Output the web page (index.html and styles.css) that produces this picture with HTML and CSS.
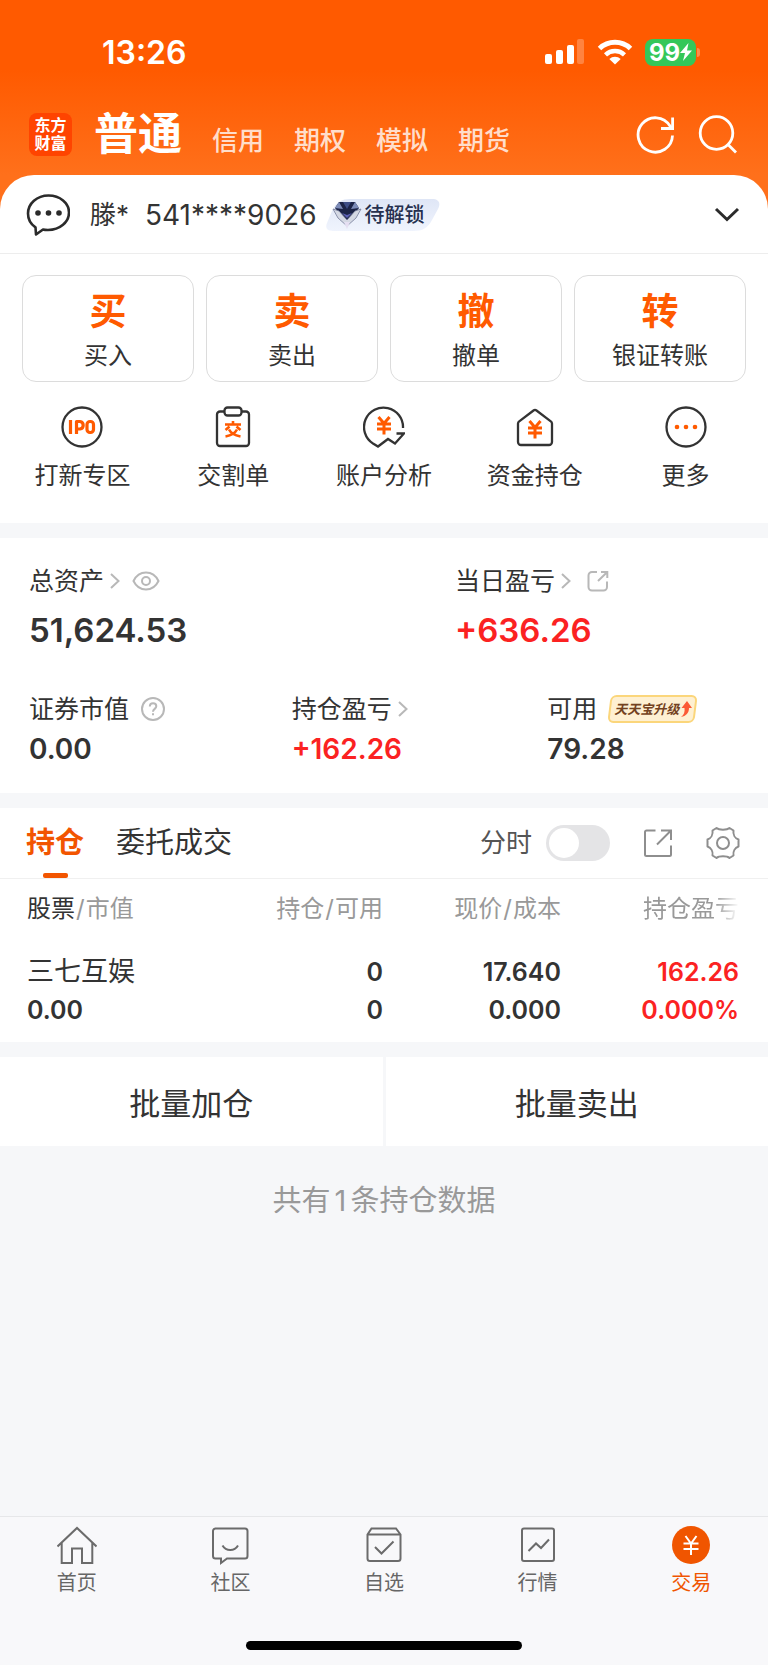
FILE: index.html
```html
<!DOCTYPE html>
<html lang="zh-CN">
<head>
    <meta charset="UTF-8">
    <meta name="viewport" content="width=device-width, initial-scale=1.0">
    <title>东方财富 - 交易</title>
    <link rel="stylesheet" href="styles.css">
</head>
<body>
    <div class="top">
        <div class="status-bar">
            <span class="time">13:26</span>
            <div class="status-icons">
                <svg class="signal" width="40" height="26" viewBox="0 0 40 26" fill="#fff">
                    <rect x="0" y="15" width="7" height="10" rx="2"/>
                    <rect x="11" y="11" width="7" height="14" rx="2"/>
                    <rect x="22" y="6" width="7" height="19" rx="2"/>
                    <rect x="32" y="0" width="7" height="25" rx="2" opacity="0.25"/>
                </svg>
                <svg class="wifi" width="36" height="26" viewBox="0 0 36 26" fill="none" stroke="#fff" stroke-width="5">
                    <path d="M2.5 9.5a22.5 22.5 0 0 1 31 0"/>
                    <path d="M8.5 15.8a14 14 0 0 1 19 0" stroke-width="4.500"/>
                    <path d="M12.3 19.9a8.5 8.5 0 0 1 11.4 0L18 25.400z" fill="#fff" stroke="none"/>
                </svg>
                <div class="battery">
                    <span>99</span>
                    <svg width="12" height="18" viewBox="0 0 12 18" fill="#fff"><path d="M8.500 0L0 10h5L3 18l9-10.500H7z"/></svg>
                </div>
            </div>
        </div>

        <header class="header">
            <div class="logo">东方<br>财富</div>
            <nav class="account-tabs">
                <a href="#" class="current">普通</a>
                <a href="#">信用</a>
                <a href="#">期权</a>
                <a href="#">模拟</a>
                <a href="#">期货</a>
            </nav>
            <div class="header-tools">
                <button type="button" aria-label="刷新">
                    <svg width="40" height="40" viewBox="0 0 40 40" fill="none" stroke="#fff" stroke-width="2.800">
                        <path d="M36.500 20.500A17.200 17.200 0 1 1 34 11L36 13"/>
                        <path d="M36.600 2.500v11H25"/>
                    </svg>
                </button>
                <button type="button" aria-label="搜索">
                    <svg width="40" height="40" viewBox="0 0 40 40" fill="none" stroke="#fff" stroke-width="2.800">
                        <circle cx="18.500" cy="18" r="16.300"/>
                        <path d="M29.500 29l8.500 8.500"/>
                    </svg>
                </button>
            </div>
        </header>

        <section class="panel account">
            <div class="account-row">
                <svg width="44" height="44" viewBox="0 0 44 44" fill="none" stroke="#2b2b2b" stroke-width="2.600" stroke-linejoin="round">
                    <path d="M9.500 34.300C4.500 31 2 26 2 20.500 2 10.500 11 2.500 22.500 2.500S43 10 43 19.500 34 37 22 37c-2 0-3.500 0-5-.500L10 41.500z"/>
                    <g fill="#2b2b2b" stroke="none"><circle cx="12" cy="20" r="2.800"/><circle cx="22.500" cy="20" r="2.800"/><circle cx="33" cy="20" r="2.800"/></g>
                </svg>
                <span class="owner">滕*</span>
                <span class="number">541****9026</span>
                <span class="level">
                    <svg class="level-shape" width="116" height="34" viewBox="0 0 116 34">
                        <defs><linearGradient id="lv" x1="0" y1="0" x2="0" y2="1"><stop offset="0" stop-color="#dfe6f6"/><stop offset="1" stop-color="#f0f4fd"/></linearGradient></defs>
                        <path d="M24 1h82c7 0 9 4 6 10l-6 11c-4 8-10 11-18 11H7c-6 0-8-3-6-8l5-12C10 4 16 1 24 1z" fill="url(#lv)"/>
                    </svg>
                    <svg class="diamond" width="30" height="28" viewBox="0 0 30 28">
                        <path d="M7 1h16l4 6-12 16L3 7z" fill="#1c2447"/>
                        <path d="M7 1l4 7-8-1zM23 1l-4 7 8-1z" fill="#7d8cb8"/>
                        <path d="M11 1l4 7 4-7z" fill="#3d4d86"/>
                        <path d="M1 8l6 2 8 9 8-9 6-2-5 9-9 8-9-8z" fill="#d5d9e4" stroke="#737b98" stroke-width="0.800"/>
                        <path d="M10 12l5 5 5-5-5 2z" fill="#5d61b5"/>
                        <path d="M12 21l3 7 3-7z" fill="#e5dff2"/>
                    </svg>
                    <span class="level-text">待解锁</span>
                </span>
                <button type="button" class="expand" aria-label="展开">
                    <svg width="26" height="16" viewBox="0 0 26 16" fill="none" stroke="#2b2b2b" stroke-width="3"><path d="M2 2l11 10.500L24 2"/></svg>
                </button>
            </div>

            <div class="trade-buttons">
                <button type="button"><b>买</b><span>买入</span></button>
                <button type="button"><b>卖</b><span>卖出</span></button>
                <button type="button"><b>撤</b><span>撤单</span></button>
                <button type="button"><b>转</b><span>银证转账</span></button>
            </div>

            <nav class="shortcuts">
                <a href="#">
                    <svg width="42" height="42" viewBox="0 0 42 42" fill="none" stroke="#333" stroke-width="2.300">
                        <circle cx="21" cy="21" r="19.500"/>
                        <g stroke="#ff5a00" stroke-width="3.200" stroke-linejoin="round"><path d="M9.500 14v14M15.500 28V15.500h3.500a3.800 3.800 0 0 1 0 7.500H15.500"/><rect x="26" y="15.500" width="6.500" height="11" rx="3"/></g>
                    </svg>
                    <span>打新专区</span>
                </a>
                <a href="#">
                    <svg width="42" height="42" viewBox="0 0 42 42" fill="none" stroke="#333" stroke-width="2.300">
                        <path d="M13 5.500H8a3 3 0 0 0-3 3V37a3 3 0 0 0 3 3h26a3 3 0 0 0 3-3V8.500a3 3 0 0 0-3-3H29"/>
                        <rect x="12.500" y="1.500" width="17" height="8" rx="3"/>
                        <path d="M21 15v3M13 18.500h16M17.500 20.500l-4 3.500M24.500 20.500l4 3.500M25 23.500c-2 4-6 6-11.500 7M17 23.500c2 4 6 6 11.500 7" stroke="#ff5a00" stroke-width="2.600"/>
                    </svg>
                    <span>交割单</span>
                </a>
                <a href="#">
                    <svg width="42" height="42" viewBox="0 0 42 42" fill="none" stroke="#333" stroke-width="2.300">
                        <path d="M40 22A19.500 19.500 0 1 0 10 37.500l5 3 10-7.500 7 4.500 9-10H33.500"/>
                        <path d="M15.500 11l5.500 6.500 5.500-6.500M14 18h14M14 23h14M21 17v11.500" stroke="#ff5a00" stroke-width="3"/>
                    </svg>
                    <span>账户分析</span>
                </a>
                <a href="#">
                    <svg width="42" height="42" viewBox="0 0 42 42" fill="none" stroke="#333" stroke-width="2.300">
                        <path d="M4 17.500a3 3 0 0 1 1.200-2.200L19.500 4.500a2.500 2.500 0 0 1 3 0l14.300 10.800a3 3 0 0 1 1.200 2.200V36a3 3 0 0 1-3 3H7a3 3 0 0 1-3-3z"/>
                        <path d="M15.500 15l5.500 6.500 5.500-6.500M14 22h14M14 27h14M21 21v11.500" stroke="#ff5a00" stroke-width="3"/>
                    </svg>
                    <span>资金持仓</span>
                </a>
                <a href="#">
                    <svg width="42" height="42" viewBox="0 0 42 42" fill="none" stroke="#333" stroke-width="2.300">
                        <circle cx="21" cy="21" r="19.500"/>
                        <g fill="#ff5a00" stroke="none"><circle cx="12" cy="21" r="2.300"/><circle cx="21" cy="21" r="2.300"/><circle cx="30" cy="21" r="2.300"/></g>
                    </svg>
                    <span>更多</span>
                </a>
            </nav>
        </section>
    </div>

    <main>
        <section class="panel assets">
            <div class="asset-row total">
                <div class="asset">
                    <div class="label">
                        <span>总资产</span>
                        <svg class="arrow" width="10" height="16" viewBox="0 0 10 16"><path d="M1 1l7.500 7L1 15"/></svg>
                        <svg class="hint" width="28" height="20" viewBox="0 0 28 20"><path d="M1.500 10C7-1.300 21-1.300 26.500 10 21 21.300 7 21.300 1.500 10z"/><circle cx="14" cy="10" r="4"/></svg>
                    </div>
                    <div class="value">51,624.53</div>
                </div>
                <div class="asset">
                    <div class="label">
                        <span>当日盈亏</span>
                        <svg class="arrow" width="10" height="16" viewBox="0 0 10 16"><path d="M1 1l7.500 7L1 15"/></svg>
                        <svg class="hint share" width="22" height="22" viewBox="0 0 22 22"><path d="M10 2H5a3.500 3.500 0 0 0-3.500 3.500V17A3.500 3.500 0 0 0 5 20.500h11.500A3.500 3.500 0 0 0 20 17v-5.500M14 2h6.300v6M20 2.300L11 11"/></svg>
                    </div>
                    <div class="value rise">+636.26</div>
                </div>
            </div>
            <div class="asset-row detail">
                <div class="asset">
                    <div class="label">
                        <span>证券市值</span>
                        <svg class="hint" width="24" height="24" viewBox="0 0 24 24"><circle cx="12" cy="12" r="11"/><path d="M8.800 9.500c0-4.500 6.500-4.300 6.500-.200 0 2.500-3.300 2.700-3.300 5.400M12 16.300v2"/></svg>
                    </div>
                    <div class="value">0.00</div>
                </div>
                <div class="asset">
                    <div class="label">
                        <span>持仓盈亏</span>
                        <svg class="arrow" width="10" height="16" viewBox="0 0 10 16"><path d="M1 1l7.500 7L1 15"/></svg>
                    </div>
                    <div class="value rise">+162.26</div>
                </div>
                <div class="asset">
                    <div class="label">
                        <span>可用</span>
                        <a href="#" class="upgrade">天天宝升级
                            <svg width="12" height="16" viewBox="0 0 12 16"><path d="M7 0l5 7H9c0 5-3 8-8 9 3-2 4-5 3.500-9H1.500z" fill="#fb5a35"/></svg>
                        </a>
                    </div>
                    <div class="value">79.28</div>
                </div>
            </div>
        </section>

        <section class="panel holdings">
            <div class="holding-tabs">
                <a href="#" class="active">持仓</a>
                <a href="#">委托成交</a>
                <div class="holding-tools">
                    <label for="minute">分时</label>
                    <input type="checkbox" id="minute" class="switch">
                    <button type="button" aria-label="分享">
                        <svg width="28" height="28" viewBox="0 0 28 28" fill="none" stroke="#8e8e8e" stroke-width="2"><path d="M11.500 1.500h-9a1.500 1.500 0 0 0-1.500 1.500v22.500A1.500 1.500 0 0 0 2.500 27H25.500a1.500 1.500 0 0 0 1.500-1.500V16.500M17 1.500h10V11M26.500 2L13 15.500"/></svg>
                    </button>
                    <button type="button" aria-label="设置">
                        <svg width="34" height="34" viewBox="0 0 34 34" fill="none" stroke="#8e8e8e" stroke-width="2" stroke-linejoin="round">
                            <path d="M10.500 2C13 4.300 21 4.300 23.500 2L27.500 4.500C26.800 8.500 29 12.200 32.500 13.500V20.500C29 21.800 26.800 25.500 27.500 29.500L23.500 32C21 29.700 13 29.700 10.500 32L6.500 29.500C7.200 25.500 5 21.800 1.500 20.500V13.500C5 12.200 7.200 8.500 6.500 4.500z"/>
                            <circle cx="17" cy="17" r="6"/>
                        </svg>
                    </button>
                </div>
            </div>
            <table>
                <thead>
                    <tr>
                        <th><em>股票</em><i>/</i>市值</th>
                        <th>持仓<i>/</i>可用</th>
                        <th>现价<i>/</i>成本</th>
                        <th><span class="fade">持仓盈亏</span></th>
                    </tr>
                </thead>
                <tbody>
                    <tr>
                        <td><span class="stock">三七互娱</span><br>0.00</td>
                        <td>0<br>0</td>
                        <td>17.640<br>0.000</td>
                        <td class="rise">162.26<br>0.000%</td>
                    </tr>
                </tbody>
            </table>
        </section>

        <div class="batch">
            <button type="button">批量加仓</button>
            <button type="button">批量卖出</button>
        </div>
    </main>
    <p class="summary">共有<span>1</span>条持仓数据</p>

    <footer class="tab-bar">
        <nav>
            <a href="#">
                <svg width="40" height="40" viewBox="0 0 40 40"><path d="M.500 21.500L20 3l19.500 18.500M4.700 18v20H15V23.500h10V38h10.300V18"/></svg>
                <span>首页</span>
            </a>
            <a href="#">
                <svg width="40" height="40" viewBox="0 0 40 40"><path d="M5 3.500h30A2.500 2.500 0 0 1 37.500 6v25a2.500 2.500 0 0 1-2.500 2.500H17L11 38v-4.500H5.500A2.500 2.500 0 0 1 3 31V6A2.500 2.500 0 0 1 5.500 3.500zM12.500 20.500c3.500 6 12 6 15.500 0"/></svg>
                <span>社区</span>
            </a>
            <a href="#">
                <svg width="40" height="40" viewBox="0 0 40 40"><path d="M3.500 9.500L7.500 3.500h24.500l4.500 6V33.500a2.500 2.500 0 0 1-2.500 2.500H6A2.500 2.500 0 0 1 3.500 33.500zM3.500 9.500h33M11 22l6.500 6.500L29.500 16.500"/></svg>
                <span>自选</span>
            </a>
            <a href="#">
                <svg width="40" height="40" viewBox="0 0 40 40"><rect x="4" y="3.500" width="32" height="32.500" rx="2"/><path d="M10.500 26l7.500-7.500 5 4.500 8-8.500"/></svg>
                <span>行情</span>
            </a>
            <a href="#" class="active">
                <svg width="40" height="40" viewBox="0 0 40 40"><circle cx="20" cy="20" r="19" fill="#f05500" stroke="none"/><path d="M14.500 11l5.500 7.500 5.500-7.500M12.500 18.500h15M12.500 24h15M20 18v12" stroke="#fff"/></svg>
                <span>交易</span>
            </a>
        </nav>
        <div class="home-indicator"></div>
    </footer>
</body>
</html>
```

FILE: styles.css
```css
* {
    box-sizing: border-box;
}

body {
    margin: 0;
    min-height: 100vh;
    display: flex;
    flex-direction: column;
    font-family: Inter, "Noto Sans CJK SC", sans-serif;
    color: #333;
    background: #f6f7f9;
}

a {
    color: inherit;
    text-decoration: none;
}

button {
    padding: 0;
    border: none;
    background: none;
    font-family: inherit;
    color: inherit;
    cursor: pointer;
}

svg {
    display: block;
    flex-shrink: 0;
}

.panel {
    background: #fff;
}

.rise {
    color: #fb2222;
}

/* Status bar */
.top {
    background: linear-gradient(#ff5a00 70px, #ff701b 175px);
}

.status-bar {
    display: flex;
    justify-content: space-between;
    align-items: center;
    height: 94px;
    padding: 10px 68px 0 102px;
    color: #fff;
}

.time {
    font-size: 32px;
    font-weight: 600;
}

.status-icons {
    display: flex;
    align-items: center;
    gap: 12px;
}

.battery {
    position: relative;
    display: flex;
    align-items: center;
    justify-content: center;
    width: 51px;
    height: 27px;
    margin-right: 4px;
    border-radius: 8px;
    background: #34c759;
    font-size: 24px;
    font-weight: 700;
}

.battery::after {
    content: "";
    position: absolute;
    right: -4px;
    top: 9px;
    width: 3px;
    height: 9px;
    border-radius: 0 3px 3px 0;
    background: rgba(255, 255, 255, 0.3);
}

/* Header */
.header {
    display: flex;
    align-items: center;
    height: 81px;
    padding: 0 30px 0 29px;
}

.logo {
    width: 43px;
    height: 43px;
    padding-top: 3px;
    border-radius: 8px;
    background: #ff4400;
    color: #fff;
    font-size: 16px;
    font-weight: 700;
    line-height: 18px;
    text-align: center;
}

.account-tabs {
    display: flex;
    align-items: baseline;
    gap: 30px;
    margin-left: 22px;
    padding-top: 5px;
    line-height: 60px;
    font-size: 26px;
    font-weight: 500;
    color: rgba(255, 255, 255, 0.8);
}

.account-tabs .current {
    font-size: 44px;
    font-weight: 700;
    color: #fff;
}

.header-tools {
    display: flex;
    gap: 22px;
    margin-left: auto;
}

/* Account panel */
.account {
    border-radius: 34px 34px 0 0;
}

.account-row {
    display: flex;
    align-items: center;
    height: 79px;
    padding: 1px 28px 0 26px;
    border-bottom: 1px solid #ededed;
    font-size: 28px;
    line-height: 36px;
}

.owner {
    margin-left: 20px;
    font-size: 26px;
}

.number {
    margin-left: 16px;
}

.level {
    position: relative;
    display: flex;
    align-items: center;
    width: 116px;
    height: 34px;
    margin-left: 9px;
    padding-left: 6px;
}

.level-shape {
    position: absolute;
    left: 0;
    top: 0;
}

.diamond,
.level-text {
    position: relative;
}

.level-text {
    margin-left: 3px;
    font-size: 20px;
    font-weight: 500;
    line-height: 34px;
    color: #26304f;
}

.expand {
    margin-left: auto;
}

.trade-buttons {
    display: grid;
    grid-template-columns: repeat(4, 1fr);
    gap: 12px;
    padding: 21px 22px 24px;
}

.trade-buttons button {
    display: flex;
    flex-direction: column;
    align-items: center;
    gap: 6px;
    padding: 14px 0 9px;
    border: 1px solid #dcdcdc;
    border-radius: 14px;
    font-size: 24px;
    line-height: 32px;
}

.trade-buttons b {
    font-size: 37px;
    font-weight: 700;
    line-height: 44px;
    color: #ff5a00;
}

.shortcuts {
    display: grid;
    grid-template-columns: repeat(5, 1fr);
    padding: 0 7px 31px;
    font-size: 24px;
    line-height: 32px;
}

.shortcuts a {
    display: flex;
    flex-direction: column;
    align-items: center;
    gap: 12px;
}

/* Assets */
main {
    display: flex;
    flex-direction: column;
    gap: 15px;
    margin-top: 15px;
}

.assets {
    padding: 25px 29px 26px;
}

.asset-row {
    display: grid;
}

.total {
    grid-template-columns: 60% 1fr;
}

.detail {
    grid-template-columns: 37% 36% 1fr;
    margin-top: 39px;
}

.label {
    display: flex;
    align-items: center;
    font-size: 25px;
    line-height: 36px;
}

.label svg {
    fill: none;
    stroke: #b8b8b8;
    stroke-width: 2;
}

.arrow {
    margin-left: 6px;
}

.hint {
    margin-left: 12px;
}

.share {
    margin-left: 16px;
}

.total .value {
    margin-top: 9px;
    font-size: 33px;
    font-weight: 600;
    line-height: 44px;
}

.detail .value {
    margin-top: 4px;
    font-size: 28px;
    font-weight: 600;
    line-height: 36px;
}

.upgrade {
    position: relative;
    z-index: 0;
    display: flex;
    align-items: center;
    gap: 1px;
    height: 28px;
    margin-left: 12px;
    padding: 0 4px 0 5px;
    font-size: 13px;
    font-weight: 700;
    font-style: italic;
    color: #734220;
}

.upgrade::before {
    content: "";
    position: absolute;
    inset: 0;
    z-index: -1;
    border: 2px solid #fbd67b;
    border-radius: 6px;
    background: #fef0d2;
    transform: skewX(-7deg);
}

.upgrade svg {
    stroke: none;
}

/* Holdings */
.holding-tabs {
    display: flex;
    align-items: center;
    gap: 32px;
    height: 71px;
    padding: 0 28px 0 26px;
    border-bottom: 1px solid #f0f0f0;
    font-size: 29px;
    line-height: 70px;
}

.holding-tabs .active {
    position: relative;
    font-weight: 700;
    color: #f25500;
}

.holding-tabs .active::after {
    content: "";
    position: absolute;
    left: 50%;
    bottom: 0;
    width: 25px;
    height: 5px;
    margin-left: -12px;
    border-radius: 2px;
    background: #f25500;
}

.holding-tools {
    display: flex;
    align-items: center;
    margin-left: auto;
    font-size: 26px;
    color: #555;
}

.holding-tools button {
    margin-left: 34px;
}

.switch {
    appearance: none;
    position: relative;
    width: 64px;
    height: 36px;
    margin: 0 0 0 14px;
    border-radius: 18px;
    background: #e4e4e6;
}

.switch::after {
    content: "";
    position: absolute;
    left: 3px;
    top: 3px;
    width: 30px;
    height: 30px;
    border-radius: 50%;
    background: #fff;
}

.switch:checked {
    background: #f25500;
}

.switch:checked::after {
    left: 31px;
}

.holdings table {
    width: 100%;
    padding: 0 29px 13px 27px;
    border-spacing: 0;
    table-layout: fixed;
}

.holdings th,
.holdings td {
    width: 25%;
    padding: 0;
    text-align: right;
}

.holdings th:first-child,
.holdings td:first-child {
    text-align: left;
}

.holdings th {
    font-size: 24px;
    font-weight: 400;
    line-height: 60px;
    color: #999;
}

.holdings th em {
    font-style: normal;
    color: #333;
}

.holdings th i {
    padding: 0 1px;
    font-style: normal;
}

.fade {
    -webkit-mask-image: linear-gradient(90deg, #000 75%, transparent);
    mask-image: linear-gradient(90deg, #000 75%, transparent);
}

.holdings td {
    padding-top: 14px;
    font-size: 25px;
    font-weight: 600;
    line-height: 38px;
}

.stock {
    font-size: 27px;
    font-weight: 400;
}

.batch {
    display: grid;
    grid-template-columns: 1fr 1fr;
    gap: 3px;
}

.batch button {
    height: 89px;
    background: #fff;
    font-size: 31px;
}

.summary {
    margin: 35px 0;
    font-size: 29px;
    line-height: 40px;
    text-align: center;
    color: #999;
}

.summary span {
    margin: 0 4px;
}

/* Bottom tab bar */
.tab-bar {
    margin-top: auto;
    padding: 8px 0 15px;
    border-top: 1px solid #e6e7e9;
    background: #f8f8fa;
}

.tab-bar nav {
    display: grid;
    grid-template-columns: repeat(5, 1fr);
    font-size: 20px;
    line-height: 28px;
    color: #666;
}

.tab-bar a {
    display: flex;
    flex-direction: column;
    align-items: center;
    gap: 4px;
}

.tab-bar svg {
    fill: none;
    stroke: #6b6b6b;
    stroke-width: 2;
}

.tab-bar .active {
    color: #f05500;
}

.home-indicator {
    width: 36%;
    height: 9px;
    margin: 44px auto 0;
    border-radius: 5px;
    background: #000;
}
```
